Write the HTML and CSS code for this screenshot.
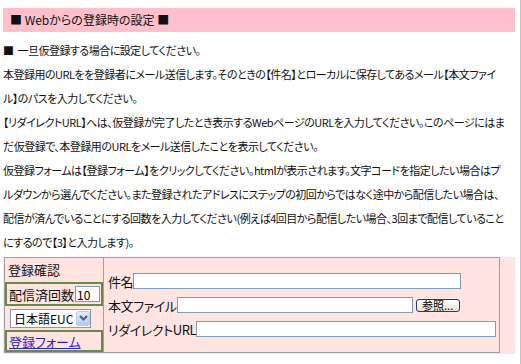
FILE: index.html
```html
<!DOCTYPE html>
<html lang="ja">

<head>
   <meta charset="UTF-8">
   <meta name="viewport" content="width=device-width, initial-scale=1.0">
   <title>Webからの登録時の設定</title>
   <link rel="stylesheet" href="styles.css">
</head>

<body>
   <div class="wrapper">
      <div class="title">■ Webからの登録時の設定 ■</div>

      <div class="guide">
         ■&nbsp; 一旦仮登録する場合に設定してください。<br>
         本登録用のURLをを登録者にメール送信します。そのときの【件名】とローカルに保存してあるメール【本文ファイ<br>ル】のパスを入力してください。<br>
         【リダイレクトURL】へは、仮登録が完了したとき表示するWebページのURLを入力してください。このページにはま<br>だ仮登録で、本登録用のURLをメール送信したことを表示してください。<br>
         仮登録フォームは【登録フォーム】をクリックしてください。htmlが表示されます。文字コードを指定したい場合はプ<br>ルダウンから選んでください。また登録されたアドレスにステップの初回からではなく途中から配信したい場合は、<br>配信が済んでいることにする回数を入力してください(例えば4回目から配信したい場合、3回まで配信していること<br>にするので【3】と入力します)。
      </div>

      <div class="form-area">
         <div class="form-box">
            <div class="side">
               <div class="side-title">登録確認</div>
               <div class="side-box">
                  <label for="sent">配信済回数</label><input id="sent" class="count" type="text" value="10">
               </div>
               <div class="side-row">
                  <span class="select-wrap">
                     <select class="charset">
                        <option>日本語EUC</option>
                        <option>日本語SJIS</option>
                        <option>UTF-8</option>
                     </select>
                     <span class="select-arrow">
                        <svg width="9" height="6" viewBox="0 0 9 6">
                           <path d="M1 1 L4.5 4.5 L8 1" fill="none" stroke="#4d6185" stroke-width="2"/>
                        </svg>
                     </span>
                  </span>
               </div>
               <div class="side-box">
                  <a href="#">登録フォーム</a>
               </div>
            </div>
            <div class="fields">
               <div class="field">
                  <label for="subject">件名</label><input id="subject" class="subject" type="text">
               </div>
               <div class="field">
                  <label for="body">本文ファイル</label><input id="body" class="bodyfile" type="text"><button class="browse">参照...</button>
               </div>
               <div class="field">
                  <label for="redirect">リダイレクトURL</label><input id="redirect" class="redirect" type="text">
               </div>
            </div>
         </div>
      </div>
   </div>
</body>

</html>
```

FILE: styles.css
```css
* {
   box-sizing: border-box;
}

html {
   height: 100%;
   border-right: 1px solid #c4c4c4;
}

body {
   margin: 8px 5px 0 3px;
   font-family: "Noto Sans CJK JP", "Liberation Sans", sans-serif;
   font-size: 12px;
   color: #111;
   font-feature-settings: "palt";
}

.title {
   background-color: pink;
   height: 24px;
   line-height: 24px;
   padding-left: 7px;
}

.guide {
   margin-top: 6px;
   font-size: 11px;
   letter-spacing: -0.5px;
   line-height: 24px;
   white-space: nowrap;
}

.form-area {
   background-color: mistyrose;
   margin-top: 3px;
   padding: 0 15px 1px 1px;
}

.form-box {
   display: flex;
   border: 1px solid #a0a0a0;
}

.side {
   width: 99px;
   flex-shrink: 0;
   display: flex;
   flex-direction: column;
   border-right: 1px solid #a0a0a0;
   font-size: 13px;
   white-space: nowrap;
}

.side-title {
   height: 24px;
   line-height: 24px;
   padding-left: 3px;
}

.side-box {
   height: 24px;
   display: flex;
   align-items: center;
   border: 2px solid #6b8a4a;
   padding-left: 2px;
}

.side-box:last-child {
   height: 22px;
}

.side-box a {
   color: #2323d0;
}

.side-row {
   height: 24px;
   display: flex;
   align-items: center;
   padding-left: 5px;
}

input {
   flex-shrink: 0;
   height: 16px;
   border: 1px solid #7f9db9;
   background-color: white;
   font: inherit;
   font-size: 12px;
   letter-spacing: 0;
   padding: 0 1px;
}

.count {
   width: 25px;
   margin-left: 1px;
}

.select-wrap {
   display: inline-flex;
   align-items: center;
   width: 81px;
   height: 19px;
   border: 1px solid #7f9db9;
   background-color: white;
}

.charset {
   -webkit-appearance: none;
   appearance: none;
   border: none;
   background: transparent;
   font: inherit;
   font-size: 12px;
   width: 65px;
   padding: 0 0 0 3px;
   outline: none;
}

.select-arrow {
   display: flex;
   align-items: center;
   justify-content: center;
   width: 14px;
   height: 15px;
   border: 1px solid #b9c9ef;
   border-radius: 2px;
   background: linear-gradient(#e3ebfd, #b7c9f6);
}

.fields {
   flex: 1;
   display: flex;
   flex-direction: column;
   justify-content: center;
   padding-left: 4px;
}

.field {
   height: 24px;
   display: flex;
   align-items: center;
   font-size: 13px;
   letter-spacing: -0.4px;
   white-space: nowrap;
}

.subject {
   width: 328px;
}

.bodyfile {
   width: 236px;
}

.redirect {
   width: 300px;
}

.browse {
   flex-shrink: 0;
   margin-left: 3px;
   width: 44px;
   height: 13px;
   padding: 0;
   font: inherit;
   font-size: 11px;
   line-height: 11px;
   letter-spacing: 0;
   border: 1px solid #20406c;
   border-radius: 3px;
   background: linear-gradient(#ffffff, #e6e3d8);
}
```
